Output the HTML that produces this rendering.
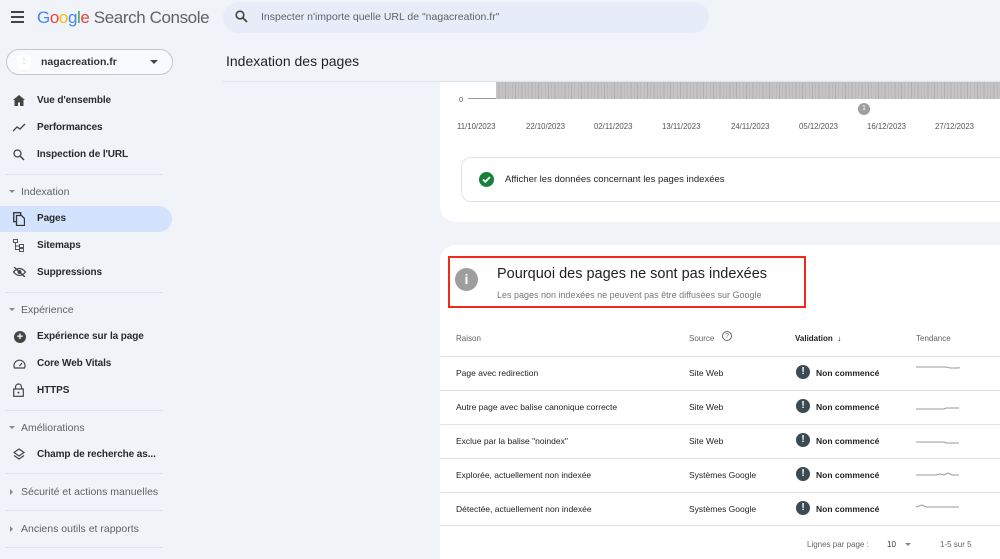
<!DOCTYPE html><html style="overflow:hidden;height:559px"><head><meta charset="utf-8"><style>
*{margin:0;padding:0;box-sizing:border-box}
body{width:1000px;height:559px;overflow:hidden;background:#f0f4f9;font-family:"Liberation Sans",sans-serif;color:#1f1f1f;position:relative}
.a{position:absolute;white-space:nowrap}
.nav{font-size:10px;font-weight:bold;color:#2a2a2a;left:37px;letter-spacing:-0.1px}
.sec{font-size:10.5px;color:#5f6368;left:21px}
.sep{position:absolute;left:5px;width:158px;height:1px;background:#dde3ea}
.ic{position:absolute;left:13px}
.hd{font-size:8px;color:#5f6368}
.row{position:absolute;left:440px;width:560px;height:34px;border-top:1px solid #e3e3e3;font-size:8.5px}
.row span{position:absolute;top:11px}
.ex{position:absolute;left:356px;top:8px;width:14px;height:14px;border-radius:50%;background:#3c4a54;color:#fff;font-size:10px;font-weight:bold;text-align:center;line-height:14px}
</style></head><body>
<div class="a" style="left:11px;top:11px"><div style="width:13px;height:2px;background:#444;margin-bottom:3px"></div><div style="width:13px;height:2px;background:#444;margin-bottom:3px"></div><div style="width:13px;height:2px;background:#444"></div></div>
<div class="a" style="left:37px;top:8px;font-size:17px;letter-spacing:-0.4px"><span style="color:#4285f4">G</span><span style="color:#ea4335">o</span><span style="color:#fbbc05">o</span><span style="color:#4285f4">g</span><span style="color:#34a853">l</span><span style="color:#ea4335">e</span> <span style="color:#5f6368">Search Console</span></div>
<div class="a" style="left:223px;top:2px;width:486px;height:31px;border-radius:16px;background:#e6edf8"></div>
<svg class="a" style="left:235px;top:10px" width="13" height="13" viewBox="0 0 13 13"><circle cx="5" cy="5" r="3.8" fill="none" stroke="#444" stroke-width="1.6"/><path d="M8 8l4 4" stroke="#444" stroke-width="1.8"/></svg>
<div class="a" style="left:261px;top:11px;font-size:10.5px;color:#5f6368">Inspecter n'importe quelle URL de "nagacreation.fr"</div>
<div class="a" style="left:6px;top:49px;width:167px;height:26px;border:1px solid #c4c7c5;border-radius:14px;background:#f8fafd"></div>
<div class="a" style="left:17px;top:55px;width:14px;height:14px;background:#fff;border-radius:3px;font-size:8px;color:#3a8;text-align:center;line-height:14px">ⵗ</div>
<div class="a" style="left:41px;top:56px;font-size:10.5px;font-weight:bold;color:#333">nagacreation.fr</div>
<div class="a" style="left:150px;top:60px;border:4px solid transparent;border-top:4px solid #444"></div>
<svg class="ic" style="top:95px" width="12" height="11" viewBox="0 0 12 11"><path d="M6 0L0 5h1.5v6h3.5V7.5h2V11h3.5V5H12z" fill="#444"/></svg>
<div class="a nav" style="top:95px">Vue d'ensemble</div>
<svg class="ic" style="top:123px" width="13" height="9" viewBox="0 0 13 9"><path d="M0 8l4-4 3 2 5-5" fill="none" stroke="#444" stroke-width="1.3"/></svg>
<div class="a nav" style="top:122px">Performances</div>
<svg class="ic" style="top:149px" width="12" height="12" viewBox="0 0 12 12"><circle cx="4.5" cy="4.5" r="3.5" fill="none" stroke="#444" stroke-width="1.3"/><path d="M7 7l4 4" stroke="#444" stroke-width="1.5"/></svg>
<div class="a nav" style="top:149px">Inspection de l'URL</div>
<div class="sep" style="top:174px"></div>
<div class="a" style="left:9px;top:190px;border:3px solid transparent;border-top:3px solid #888"></div>
<div class="a sec" style="top:186px">Indexation</div>
<div class="a" style="left:0;top:206px;width:172px;height:26px;background:#d3e3fd;border-radius:0 13px 13px 0"></div>
<svg class="ic" style="top:212px" width="12" height="14" viewBox="0 0 12 14"><rect x="0.7" y="0.7" width="7" height="9" fill="none" stroke="#333" stroke-width="1.3"/><path d="M3.5 3.5h5l3 3v7h-8z" fill="#d3e3fd" stroke="#333" stroke-width="1.3"/></svg>
<div class="a nav" style="top:213px">Pages</div>
<svg class="ic" style="top:239px" width="12" height="13" viewBox="0 0 12 13"><rect x="0.5" y="0.5" width="4" height="3" fill="none" stroke="#555"/><rect x="6.5" y="5.5" width="4" height="3" fill="none" stroke="#555"/><rect x="6.5" y="9.5" width="4" height="3" fill="none" stroke="#555"/><path d="M2.5 3.5v7h4M2.5 7h4" fill="none" stroke="#555"/></svg>
<div class="a nav" style="top:240px">Sitemaps</div>
<svg class="ic" style="top:267px" width="13" height="10" viewBox="0 0 13 10"><path d="M0.5 5Q6.5-2 12.5 5Q6.5 12 0.5 5z" fill="none" stroke="#444" stroke-width="1.3"/><circle cx="6.5" cy="5" r="2" fill="#444"/><path d="M1 0l11 10" stroke="#444" stroke-width="1.3"/></svg>
<div class="a nav" style="top:267px">Suppressions</div>
<div class="sep" style="top:292px"></div>
<div class="a" style="left:9px;top:308px;border:3px solid transparent;border-top:3px solid #888"></div>
<div class="a sec" style="top:304px">Expérience</div>
<div class="a" style="left:14px;top:331px;width:12px;height:12px;border-radius:50%;background:#444;color:#fff;font-size:11px;line-height:12px;text-align:center;font-weight:bold">+</div>
<div class="a nav" style="top:331px">Expérience sur la page</div>
<svg class="ic" style="top:359px" width="13" height="10" viewBox="0 0 13 10"><path d="M1.5 9A5.5 5.5 0 1 1 11.5 9z" fill="none" stroke="#444" stroke-width="1.2"/><path d="M6.5 7l2.5-3" stroke="#444" stroke-width="1.2"/></svg>
<div class="a nav" style="top:358px">Core Web Vitals</div>
<svg class="ic" style="top:383px" width="11" height="14" viewBox="0 0 11 14"><path d="M2.5 6V4a3 3 0 0 1 6 0v2" fill="none" stroke="#444" stroke-width="1.2"/><rect x="0.7" y="6" width="9.6" height="7.3" fill="none" stroke="#444" stroke-width="1.2"/><circle cx="5.5" cy="9.6" r="1" fill="#444"/></svg>
<div class="a nav" style="top:385px">HTTPS</div>
<div class="sep" style="top:410px"></div>
<div class="a" style="left:9px;top:426px;border:3px solid transparent;border-top:3px solid #888"></div>
<div class="a sec" style="top:422px">Améliorations</div>
<svg class="ic" style="top:448px" width="12" height="12" viewBox="0 0 12 12"><path d="M6 1l5 3.5-5 3.5-5-3.5z M1 7.5l5 3.5 5-3.5" fill="none" stroke="#444" stroke-width="1.2"/></svg>
<div class="a nav" style="top:449px">Champ de recherche as...</div>
<div class="sep" style="top:473px"></div>
<div class="a" style="left:10px;top:489px;border:3px solid transparent;border-left:3px solid #888"></div>
<div class="a sec" style="top:486px">Sécurité et actions manuelles</div>
<div class="sep" style="top:510px"></div>
<div class="a" style="left:10px;top:526px;border:3px solid transparent;border-left:3px solid #888"></div>
<div class="a sec" style="top:523px">Anciens outils et rapports</div>
<div class="sep" style="top:547px"></div>
<div class="a" style="left:226px;top:53px;font-size:14px;color:#1f1f1f">Indexation des pages</div>
<div class="a" style="left:223px;top:81px;width:777px;height:1px;background:#dde3ea"></div>
<div class="a" style="left:440px;top:82px;width:560px;height:140px;background:#fff;border-radius:0 0 0 16px"></div>
<div class="a" style="left:496px;top:82px;width:504px;height:17px;background:repeating-linear-gradient(90deg,#c4c4c4 0 2.6px,#b0b0b0 2.6px 3.3px)"></div>
<div class="a" style="left:468px;top:98px;width:28px;height:1px;background:#999"></div>
<div class="a" style="left:459px;top:95px;font-size:7.5px;color:#555">0</div>
<div class="a" style="left:858px;top:103px;width:12px;height:12px;border-radius:50%;background:#9e9e9e;color:#fff;font-size:7px;text-align:center;line-height:12px">1</div>
<div class="a" style="left:457px;top:122px;font-size:7.8px;color:#555">
<span style="position:absolute;left:0">11/10/2023</span><span style="position:absolute;left:69px">22/10/2023</span><span style="position:absolute;left:137px">02/11/2023</span><span style="position:absolute;left:205px">13/11/2023</span><span style="position:absolute;left:274px">24/11/2023</span><span style="position:absolute;left:342px">05/12/2023</span><span style="position:absolute;left:410px">16/12/2023</span><span style="position:absolute;left:478px">27/12/2023</span></div>
<div class="a" style="left:461px;top:157px;width:539px;height:45px;border:1px solid #e3e3e3;border-right:none;border-radius:10px 0 0 10px"></div>
<div class="a" style="left:479px;top:172px;width:15px;height:15px;border-radius:50%;background:#188038"></div>
<svg class="a" style="left:482px;top:176px" width="9" height="7" viewBox="0 0 9 7"><path d="M1 3.5l2.3 2.3L8 1" fill="none" stroke="#fff" stroke-width="1.8"/></svg>
<div class="a" style="left:505px;top:174px;font-size:9.5px;color:#1f1f1f">Afficher les données concernant les pages indexées</div>
<div class="a" style="left:440px;top:245px;width:560px;height:314px;background:#fff;border-radius:16px 0 0 0"></div>
<div class="a" style="left:448px;top:256px;width:358px;height:52px;border:2.5px solid #ee2a1b"></div>
<div class="a" style="left:455px;top:268px;width:23px;height:23px;border-radius:50%;background:#9e9e9e;color:#fff;font-size:14px;font-weight:bold;text-align:center;line-height:23px">i</div>
<div class="a" style="left:497px;top:266px;font-size:14.5px;color:#1f1f1f">Pourquoi des pages ne sont pas indexées</div>
<div class="a" style="left:497px;top:290px;font-size:9px;color:#777">Les pages non indexées ne peuvent pas être diffusées sur Google</div>
<div class="a hd" style="left:456px;top:334px">Raison</div>
<div class="a hd" style="left:689px;top:334px">Source</div>
<div class="a" style="left:722px;top:331px;width:10px;height:10px;border:1px solid #666;border-radius:50%;font-size:7px;text-align:center;line-height:9px;color:#666">?</div>
<div class="a" style="left:795px;top:334px;font-size:8px;font-weight:bold;color:#1f1f1f">Validation &nbsp;↓</div>
<div class="a hd" style="left:916px;top:334px">Tendance</div>
<div class="row" style="top:356px"><span style="left:16px">Page avec redirection</span><span style="left:249px">Site Web</span><div class="ex">!</div><span style="left:376px;font-weight:bold">Non commencé</span><svg style="position:absolute;left:476px;top:8px" width="44" height="6"><path d="M0 2H30L34 3H43L43 2" fill="none" stroke="#999"/></svg></div>
<div class="row" style="top:390px"><span style="left:16px">Autre page avec balise canonique correcte</span><span style="left:249px">Site Web</span><div class="ex">!</div><span style="left:376px;font-weight:bold">Non commencé</span><svg style="position:absolute;left:476px;top:14px" width="44" height="6"><path d="M0 4H28L30 3H43" fill="none" stroke="#999"/></svg></div>
<div class="row" style="top:424px"><span style="left:16px">Exclue par la balise "noindex"</span><span style="left:249px">Site Web</span><div class="ex">!</div><span style="left:376px;font-weight:bold">Non commencé</span><svg style="position:absolute;left:476px;top:14px" width="44" height="6"><path d="M0 3H28L30 4H43" fill="none" stroke="#999"/></svg></div>
<div class="row" style="top:458px"><span style="left:16px">Explorée, actuellement non indexée</span><span style="left:249px">Systèmes Google</span><div class="ex">!</div><span style="left:376px;font-weight:bold">Non commencé</span><svg style="position:absolute;left:476px;top:12px" width="44" height="6"><path d="M0 4H20L24 3L28 4L32 2L36 4H43" fill="none" stroke="#999"/></svg></div>
<div class="row" style="top:492px"><span style="left:16px">Détectée, actuellement non indexée</span><span style="left:249px">Systèmes Google</span><div class="ex">!</div><span style="left:376px;font-weight:bold">Non commencé</span><svg style="position:absolute;left:476px;top:10px" width="44" height="6"><path d="M0 4L6 2L10 4H43" fill="none" stroke="#999"/></svg></div>
<div class="a" style="left:440px;top:525px;width:560px;height:1px;background:#e3e3e3"></div>
<div class="a" style="left:807px;top:540px;font-size:8px;color:#666">Lignes par page :</div>
<div class="a" style="left:887px;top:540px;font-size:8px;color:#333">10</div>
<div class="a" style="left:905px;top:543px;border:3px solid transparent;border-top:3px solid #888"></div>
<div class="a" style="left:940px;top:540px;font-size:8px;color:#666">1-5 sur 5</div>
</body></html>
